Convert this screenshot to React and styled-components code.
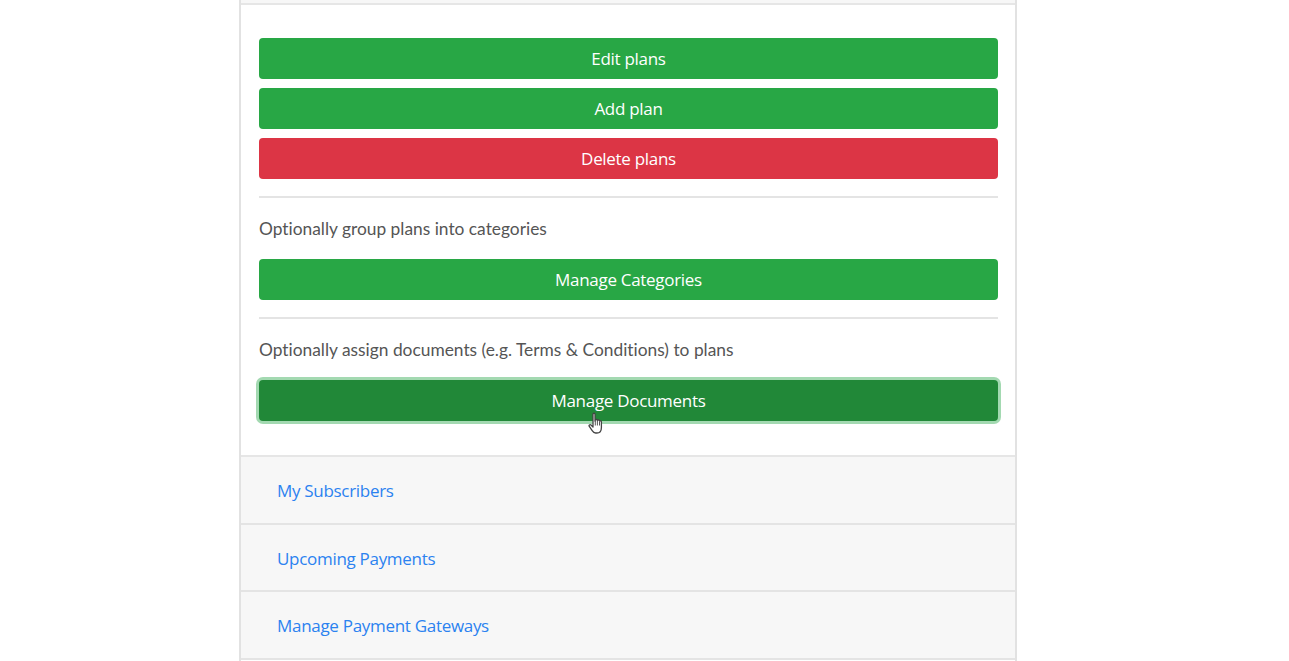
import styled, { createGlobalStyle } from "styled-components";

const GlobalStyle = createGlobalStyle`
  html, body {
    margin: 0;
    padding: 0;
    background: #fff;
    overflow: hidden;
  }
`;

const Page = styled.div`
  width: 1289px;
  height: 661px;
  overflow: hidden;
  display: flex;
  padding-left: 239px;
  box-sizing: border-box;
  position: relative;
`;

const Card = styled.div`
  width: 774px;
  height: 700px;
  border-left: 2px solid #e2e2e2;
  border-right: 2px solid #e2e2e2;
  flex-shrink: 0;
`;

const CardTop = styled.div`
  height: 3px;
  background: #f7f7f7;
  border-bottom: 2px solid #e6e6e6;
`;

const CardBody = styled.div`
  padding: 33px 17px 34px 18px;
  border-bottom: 2px solid #e6e6e6;
`;

const ButtonStack = styled.div`
  display: flex;
  flex-direction: column;
  gap: 9px;
`;

const Button = styled.button`
  display: block;
  width: 100%;
  height: 41px;
  padding: 0;
  border: none;
  border-radius: 4px;
  color: #fff;
  font-family: "Open Sans", "Noto Sans", sans-serif;
  font-size: 17px;
  letter-spacing: -0.3px;
  background: ${(p) => p.$bg};
  box-shadow: ${(p) => (p.$focus ? "0 0 0 3px #a3d9b1" : "none")};
`;

const Divider = styled.hr`
  border: none;
  border-top: 2px solid #e4e4e4;
  margin: 17px 0 19px;
`;

const Hint = styled.p`
  margin: 0 0 19px;
  color: #555;
  font-family: Lato, sans-serif;
  font-size: 17.35px;
  font-variant-ligatures: none;
  line-height: 23px;
`;

const LinkRow = styled.div`
  height: 64.07px;
  display: flex;
  align-items: center;
  padding: 1.6px 0 0 36px;
  background: #f7f7f7;
  border-bottom: 2px solid #e4e4e4;
`;

const RowLink = styled.a`
  color: #2b82f0;
  font-family: "Open Sans", "Noto Sans", sans-serif;
  font-size: 17px;
  letter-spacing: -0.3px;
  text-decoration: none;
`;

const Pointer = styled.svg`
  position: absolute;
  left: 588px;
  top: 412px;
`;

export default function App() {
  return (
    <Page>
      <GlobalStyle />
      <Card>
        <CardTop />
        <CardBody>
          <ButtonStack>
            <Button $bg="#28a745">Edit plans</Button>
            <Button $bg="#28a745">Add plan</Button>
            <Button $bg="#dc3545">Delete plans</Button>
          </ButtonStack>
          <Divider />
          <Hint>Optionally group plans into categories</Hint>
          <Button $bg="#28a745">Manage Categories</Button>
          <Divider />
          <Hint>Optionally assign documents (e.g. Terms &amp; Conditions) to plans</Hint>
          <Button $bg="#218838" $focus>Manage Documents</Button>
        </CardBody>
        <LinkRow><RowLink href="#">My Subscribers</RowLink></LinkRow>
        <LinkRow><RowLink href="#">Upcoming Payments</RowLink></LinkRow>
        <LinkRow><RowLink href="#">Manage Payment Gateways</RowLink></LinkRow>
      </Card>
      <Pointer width="16" height="24" viewBox="0 0 16 24">
        <path
          d="M5 2.2c0-1.3 2-1.3 2 0V9l.4-1c.6-.9 1.9-.6 1.9.5l.3-.2c.7-.7 1.9-.3 1.9.7.8-.5 1.9-.1 1.9.9v5.5c0 3.3-1.7 5.6-4.6 5.6H7.6c-1.6 0-2.5-.9-3.4-2.3L1.3 14.4c-.8-1.2.7-2.3 1.7-1.4L5 15V2.2z"
          fill="#fff"
          stroke="#444"
          strokeWidth="1.3"
          strokeLinejoin="round"
        />
        <path d="M7.3 9v4.5M9.4 9v4.5M11.5 9.5v4" stroke="#444" strokeWidth="0.9" fill="none" />
      </Pointer>
    </Page>
  );
}
